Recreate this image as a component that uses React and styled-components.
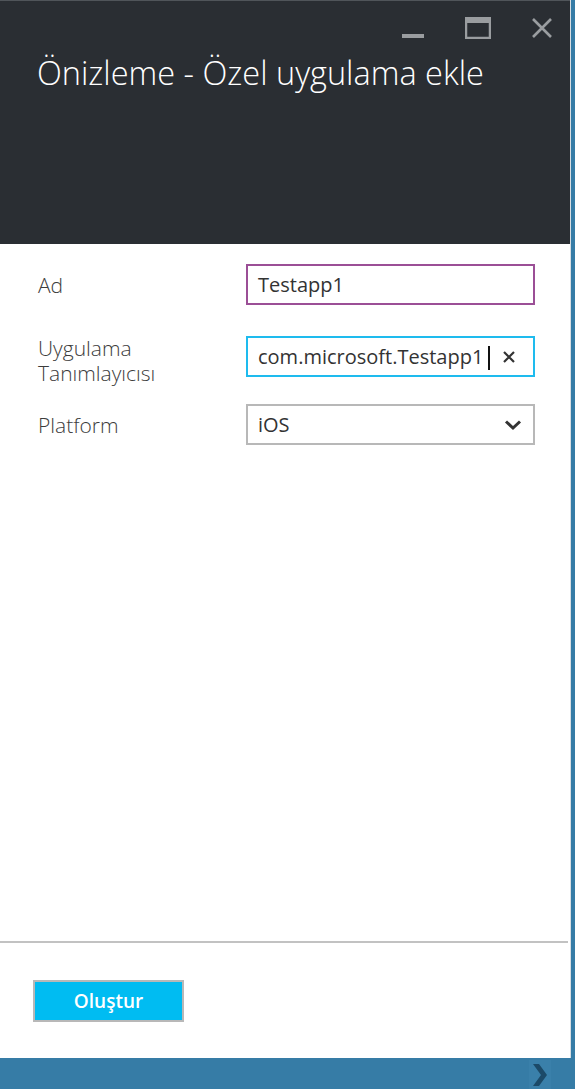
import React from "react";
import styled, { createGlobalStyle } from "styled-components";

const GlobalStyle = createGlobalStyle`
  html, body {
    margin: 0;
    padding: 0;
    background: #3a7ca5;
  }
  body {
    font-family: "Open Sans", "Liberation Sans", sans-serif;
  }
`;

const Page = styled.div`
  width: 575px;
  height: 1089px;
  display: flex;
  flex-direction: column;
  background: #367ca6;
  overflow: hidden;
`;

const Blade = styled.div`
  width: 570px;
  height: 1058px;
  display: flex;
  flex-direction: column;
  background: #ffffff;
  border-right: 1px solid #d6dde2;
`;

const Header = styled.div`
  height: 244px;
  background: #2a2e33;
  border-top: 1px solid #50555a;
  box-sizing: border-box;
  position: relative;
`;

const Controls = styled.div`
  position: absolute;
  top: 16px;
  right: 17px;
  display: flex;
  align-items: flex-start;
  gap: 40px;
`;

const Title = styled.h1`
  margin: 0;
  padding: 50px 0 0 37px;
  font-family: "Open Sans", "Liberation Sans", sans-serif;
  font-weight: 300;
  font-size: 32.5px;
  line-height: 44px;
  color: #ffffff;
`;

const Form = styled.div`
  flex: 1;
  display: flex;
  flex-direction: column;
  padding: 20px 36px 0 38px;
`;

const Row = styled.div`
  display: grid;
  grid-template-columns: 208px 289px;
  align-items: start;
  height: 41px;
  margin-bottom: ${(p) => p.$after || 0}px;
`;

const Label = styled.div`
  font-size: 21px;
  font-weight: 300;
  line-height: 25px;
  color: #3c3c3c;
  padding-top: ${(p) => p.$top ?? 9}px;
`;

const LabelLine = styled.div`
  height: 25px;
`;

const Field = styled.div`
  height: 41px;
  box-sizing: border-box;
  border: 2px solid ${(p) => p.$color};
  display: flex;
  align-items: center;
  padding: 0 ${(p) => p.$right || 10}px 0 10px;
  font-size: 20px;
  color: #333333;
  background: #fff;
`;

const FieldText = styled.span`
  flex: 1;
  white-space: nowrap;
`;

const Caret = styled.span`
  display: inline-block;
  width: 2px;
  height: 24px;
  background: #111;
  margin-left: 5px;
  vertical-align: middle;
`;

const Footer = styled.div`
  border-top: 2px solid #c2c2c2;
  height: 117px;
  box-sizing: border-box;
  padding: 37px 0 0 33px;
  margin-right: 2px;
`;

const Button = styled.button`
  width: 151px;
  height: 42px;
  background: #00bcf2;
  border: 2px solid #b8b8b8;
  color: #ffffff;
  font-family: "Open Sans", "Liberation Sans", sans-serif;
  font-size: 19px;
  font-weight: 600;
  padding: 0;
  cursor: pointer;
`;

const BottomBar = styled.div`
  flex: 1;
  display: flex;
  justify-content: flex-end;
  align-items: flex-end;
  padding-right: 24px;
`;

const Chevron = styled.div`
  width: 22px;
  height: 29px;
  display: flex;
  align-items: center;
  justify-content: center;
  background: #3a80aa;
`;

const Minimize = () => (
  <svg width="24" height="24" viewBox="0 0 24 24">
    <rect x="1" y="17" width="22" height="4" fill="#9a9da0" />
  </svg>
);

const Maximize = () => (
  <svg width="26" height="22" viewBox="0 0 26 22">
    <rect x="1" y="1" width="24" height="20" fill="none" stroke="#9a9da0" strokeWidth="2.5" />
    <rect x="1" y="1" width="24" height="5" fill="#9a9da0" />
  </svg>
);

const Close = () => (
  <svg width="22" height="22" viewBox="0 0 22 22">
    <path d="M2 2 L20 20 M20 2 L2 20" stroke="#9a9da0" strokeWidth="2.6" />
  </svg>
);

const ClearX = () => (
  <svg width="14" height="14" viewBox="0 0 14 14">
    <path d="M2 2 L12 12 M12 2 L2 12" stroke="#333" strokeWidth="2.2" />
  </svg>
);

const ChevronDown = () => (
  <svg width="18" height="12" viewBox="0 0 18 12">
    <path d="M2 2.5 L9 9 L16 2.5" fill="none" stroke="#333" strokeWidth="3" />
  </svg>
);

const ChevronRight = () => (
  <svg width="16" height="22" viewBox="0 0 16 22">
    <path d="M1 0 L7 0 L15 11 L7 22 L1 22 L9 11 Z" fill="#1c4a68" />
  </svg>
);

export default function App() {
  return (
    <Page>
      <GlobalStyle />
      <Blade>
        <Header>
          <Controls>
            <Minimize />
            <Maximize />
            <Close />
          </Controls>
          <Title>Önizleme - Özel uygulama ekle</Title>
        </Header>
        <Form>
          <Row $after={31}>
            <Label>Ad</Label>
            <Field $color="#9b4f96">
              <FieldText>Testapp1</FieldText>
            </Field>
          </Row>
          <Row $after={27}>
            <Label $top={-6}>
              <LabelLine>Uygulama</LabelLine>
              <LabelLine>Tanımlayıcısı</LabelLine>
            </Label>
            <Field $color="#1ebbee" $right={17}>
              <FieldText>
                com.microsoft.Testapp1
                <Caret />
              </FieldText>
              <ClearX />
            </Field>
          </Row>
          <Row>
            <Label>Platform</Label>
            <Field $color="#b8b8b8" $right={11}>
              <FieldText>iOS</FieldText>
              <ChevronDown />
            </Field>
          </Row>
        </Form>
        <Footer>
          <Button>Oluştur</Button>
        </Footer>
      </Blade>
      <BottomBar>
        <Chevron>
          <ChevronRight />
        </Chevron>
      </BottomBar>
    </Page>
  );
}
